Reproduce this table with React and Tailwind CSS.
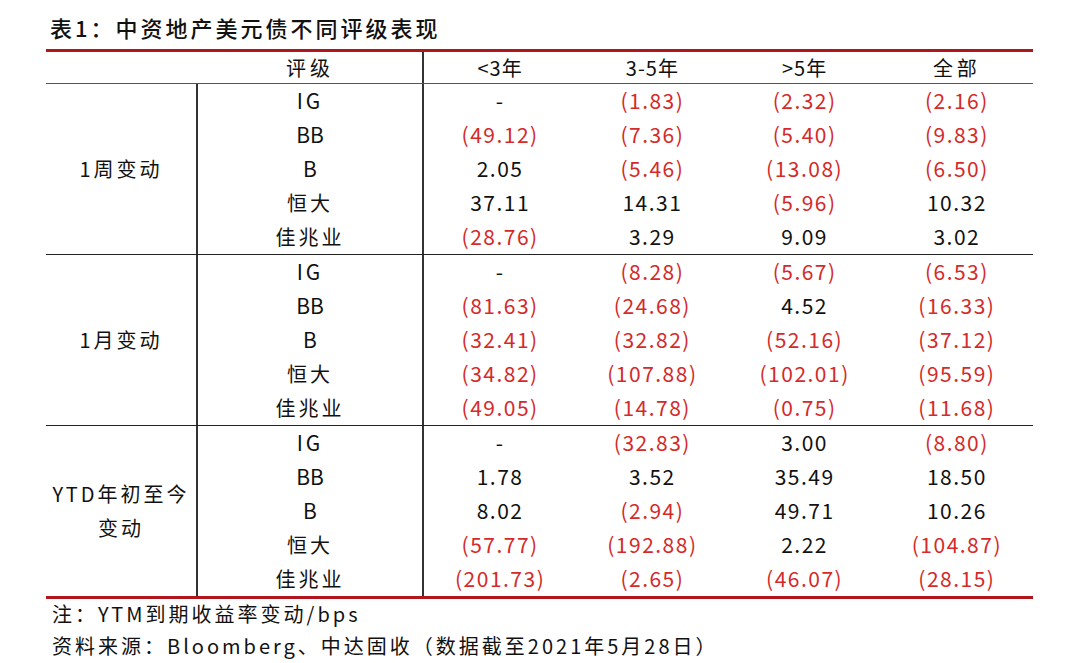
import React from "react";

const groups = [
  {
    label: ["1周变动"],
    rows: [
      ["IG", "-", "(1.83)", "(2.32)", "(2.16)"],
      ["BB", "(49.12)", "(7.36)", "(5.40)", "(9.83)"],
      ["B", "2.05", "(5.46)", "(13.08)", "(6.50)"],
      ["恒大", "37.11", "14.31", "(5.96)", "10.32"],
      ["佳兆业", "(28.76)", "3.29", "9.09", "3.02"],
    ],
  },
  {
    label: ["1月变动"],
    rows: [
      ["IG", "-", "(8.28)", "(5.67)", "(6.53)"],
      ["BB", "(81.63)", "(24.68)", "4.52", "(16.33)"],
      ["B", "(32.41)", "(32.82)", "(52.16)", "(37.12)"],
      ["恒大", "(34.82)", "(107.88)", "(102.01)", "(95.59)"],
      ["佳兆业", "(49.05)", "(14.78)", "(0.75)", "(11.68)"],
    ],
  },
  {
    label: ["YTD年初至今", "变动"],
    rows: [
      ["IG", "-", "(32.83)", "3.00", "(8.80)"],
      ["BB", "1.78", "3.52", "35.49", "18.50"],
      ["B", "8.02", "(2.94)", "49.71", "10.26"],
      ["恒大", "(57.77)", "(192.88)", "2.22", "(104.87)"],
      ["佳兆业", "(201.73)", "(2.65)", "(46.07)", "(28.15)"],
    ],
  },
];

const font = {
  fontFamily: '"Noto Sans CJK SC", "Noto Sans", sans-serif',
};

function Val({ v }) {
  const red = v.startsWith("(");
  return (
    <div
      className={`flex-1 h-[34px] flex items-center justify-center text-[21px] tracking-[1.5px] ${
        red ? "text-[#d42a2a]" : "text-[#111]"
      }`}
    >
      {v}
    </div>
  );
}

function Rating({ t }) {
  const latin = /^[A-Z]+$/.test(t);
  const cls =
    t === "IG"
      ? "tracking-[3px] text-[21px]"
      : latin
      ? "tracking-[0px] text-[21px]"
      : "tracking-[3px]";
  return (
    <div className={`h-[34px] flex items-center justify-center ${cls}`}>{t}</div>
  );
}

export default function App() {
  return (
    <div
      className="w-[1080px] h-[663px] bg-white overflow-hidden text-[20px] font-normal text-[#111]"
      style={font}
    >
      <div className="h-[49px] pl-[50px] pt-[6px] flex items-center text-[22px] font-medium tracking-[3px] text-[#111]">
        表1：中资地产美元债不同评级表现
      </div>
      <div className="ml-[46px] w-[987px] border-t-[3px] border-b-[3px] border-[#b0161b]">
        <div className="flex h-[32px] border-b border-[#555]">
          <div className="w-[152px]" />
          <div className="w-[226px] border-r-2 border-[#333] flex items-center justify-center tracking-[4px]">
            评级
          </div>
          <div className="flex-1 flex items-center justify-center tracking-[1px]">&lt;3年</div>
          <div className="flex-1 flex items-center justify-center tracking-[1px]">3-5年</div>
          <div className="flex-1 flex items-center justify-center tracking-[1px]">&gt;5年</div>
          <div className="flex-1 flex items-center justify-center tracking-[4px]">全部</div>
        </div>
        {groups.map((g, gi) => (
          <div
            key={gi}
            className={`flex ${gi < groups.length - 1 ? "border-b border-[#222]" : ""}`}
          >
            <div className="w-[152px] border-r-2 border-[#333] flex flex-col items-center justify-center leading-[34px] tracking-[3px]">
              {g.label.map((l, li) => (
                <div key={li}>{l}</div>
              ))}
            </div>
            <div className="w-[226px] border-r-2 border-[#333] flex flex-col">
              {g.rows.map((r, ri) => (
                <Rating key={ri} t={r[0]} />
              ))}
            </div>
            <div className="flex-1 flex flex-col">
              {g.rows.map((r, ri) => (
                <div key={ri} className="flex">
                  {r.slice(1).map((v, vi) => (
                    <Val key={vi} v={v} />
                  ))}
                </div>
              ))}
            </div>
          </div>
        ))}
      </div>
      <div className="pl-[52px] h-[29px] flex items-center tracking-[3px] text-[#111]">
        注：YTM到期收益率变动/bps
      </div>
      <div className="pl-[52px] h-[36px] flex items-center tracking-[3px] text-[#111]">
        资料来源：Bloomberg、中达固收（数据截至2021年5月28日）
      </div>
    </div>
  );
}
